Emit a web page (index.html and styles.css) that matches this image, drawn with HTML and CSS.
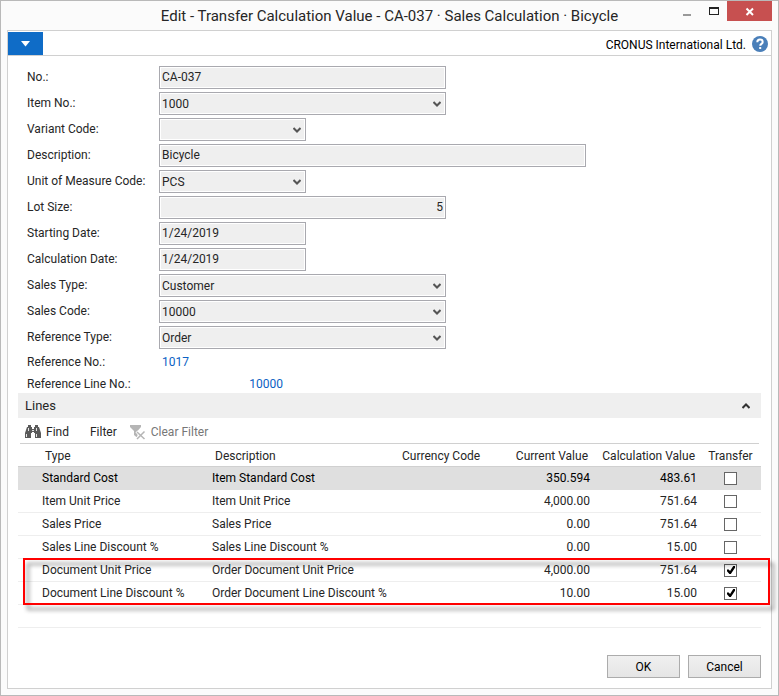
FILE: index.html
```html
<!DOCTYPE html>
<html lang="en">
<head>
<meta charset="utf-8">
<title>Edit - Transfer Calculation Value</title>
<link rel="stylesheet" href="styles.css">
</head>
<body>
<div class="window">
  <header class="titlebar">
    <h1 class="title">Edit - Transfer Calculation Value - CA-037 · Sales Calculation · Bicycle</h1>
    <div class="controls">
      <button class="control" type="button" aria-label="Minimize"><svg width="27" height="20" viewBox="0 0 27 20"><path d="M10 13h8v2h-8z" fill="#999"/></svg></button>
      <button class="control" type="button" aria-label="Maximize"><svg width="27" height="20" viewBox="0 0 27 20"><path d="M9 6h10v8H9zM10 8v5h8V8z" fill="#222" fill-rule="evenodd"/></svg></button>
      <button class="control close" type="button" aria-label="Close"><svg width="45" height="20" viewBox="0 0 45 20"><path d="M19.500 7.500l6.500 6.500M26 7.500l-6.500 6.500" stroke="#fff" stroke-width="2"/></svg></button>
    </div>
  </header>
  <main class="panel">
    <div class="ribbon">
      <button class="app-menu" type="button" aria-label="Application menu"><svg width="9" height="6" viewBox="0 0 9 6"><path d="M0 0h9L4.500 5.500z" fill="#fff"/></svg></button>
      <span class="company">CRONUS International Ltd.</span>
      <button class="help" type="button" aria-label="Help"><svg width="16" height="16" viewBox="0 0 16 16"><circle cx="8" cy="8" r="8" fill="#4a7fb9"/><path d="M5.300 6.200C5.300 4.300 6.500 3.500 8 3.500s2.700.9 2.700 2.400c0 1.900-2.500 2-2.500 3.900" fill="none" stroke="#fff" stroke-width="2"/><path d="M7.200 11h2v2h-2z" fill="#fff"/></svg></button>
    </div>
    <form class="form">
      <div class="row"><label for="no">No.:</label><input class="field" id="no" value="CA-037" readonly></div>
      <div class="row"><label for="item">Item No.:</label><span class="combo"><select class="field" id="item"><option>1000</option></select><svg class="chevron" width="8" height="6" viewBox="0 0 8 6"><path d="M.500 1L4 4.500 7.500 1" /></svg></span></div>
      <div class="row"><label for="variant">Variant Code:</label><span class="combo short"><select class="field" id="variant"><option></option></select><svg class="chevron" width="8" height="6" viewBox="0 0 8 6"><path d="M.500 1L4 4.500 7.500 1" /></svg></span></div>
      <div class="row"><label for="desc">Description:</label><input class="field long" id="desc" value="Bicycle" readonly></div>
      <div class="row"><label for="uom">Unit of Measure Code:</label><span class="combo short"><select class="field" id="uom"><option>PCS</option></select><svg class="chevron" width="8" height="6" viewBox="0 0 8 6"><path d="M.500 1L4 4.500 7.500 1" /></svg></span></div>
      <div class="row"><label for="lot">Lot Size:</label><input class="field number" id="lot" value="5" readonly></div>
      <div class="row"><label for="start">Starting Date:</label><input class="field short" id="start" value="1/24/2019" readonly></div>
      <div class="row"><label for="calc">Calculation Date:</label><input class="field short" id="calc" value="1/24/2019" readonly></div>
      <div class="row"><label for="stype">Sales Type:</label><span class="combo"><select class="field" id="stype"><option>Customer</option></select><svg class="chevron" width="8" height="6" viewBox="0 0 8 6"><path d="M.500 1L4 4.500 7.500 1" /></svg></span></div>
      <div class="row"><label for="scode">Sales Code:</label><span class="combo"><select class="field" id="scode"><option>10000</option></select><svg class="chevron" width="8" height="6" viewBox="0 0 8 6"><path d="M.500 1L4 4.500 7.500 1" /></svg></span></div>
      <div class="row"><label for="rtype">Reference Type:</label><span class="combo"><select class="field" id="rtype"><option>Order</option></select><svg class="chevron" width="8" height="6" viewBox="0 0 8 6"><path d="M.500 1L4 4.500 7.500 1" /></svg></span></div>
      <div class="row compact"><span>Reference No.:</span><a class="value" href="#">1017</a></div>
      <div class="row compact"><span>Reference Line No.:</span><a class="value number-link" href="#">10000</a></div>
    </form>
    <section class="lines">
      <div class="lines-head"><h2>Lines</h2><button class="collapse" type="button" aria-label="Collapse"><svg width="8" height="6" viewBox="0 0 8 6"><path d="M.500 5L4 1.500 7.500 5" fill="none" stroke="#333" stroke-width="2"/></svg></button></div>
      <div class="toolbar">
        <button class="tool find" type="button"><svg width="16" height="14" viewBox="0 0 16 14"><path d="M3 0h3v2h1v2h2V2h1V0h3v2h1l2 6v5h-6V8H9V7H7v1H6v5H0V8l2-6h1z" fill="#5a5a5a"/><path d="M1 9h1v3H1zM11 9h1v3h-1zM3 3h1v3H3zM11 3h1v3h-1zM7 5h2v1H7z" fill="#e4e4e4"/></svg>Find</button>
        <button class="tool" type="button">Filter</button>
        <button class="tool clear" type="button"><svg width="16" height="16" viewBox="0 0 16 16"><path d="M0 1h11v2L7.500 7v7L4 11V7L0 3z" fill="#b5b5b5"/><path d="M6.500 7.500l8 7.500M14.500 7.500l-8 7.500" stroke="#fff" stroke-width="3"/><path d="M7 8l7.500 7M14.500 7.500L7 15" stroke="#b5b5b5" stroke-width="1.500"/></svg>Clear Filter</button>
      </div>
      <div class="grid">
        <table>
          <colgroup><col class="c-type"><col class="c-desc"><col class="c-cur"><col class="c-val"><col class="c-val"><col class="c-check"></colgroup>
          <thead><tr><th>Type</th><th>Description</th><th>Currency Code</th><th class="num">Current Value</th><th class="num">Calculation Value</th><th class="check">Transfer</th></tr></thead>
          <tbody>
            <tr class="selected"><td>Standard Cost</td><td>Item Standard Cost</td><td></td><td class="num">350.594</td><td class="num">483.61</td><td class="check"><input type="checkbox" aria-label="Transfer Standard Cost"></td></tr>
            <tr><td>Item Unit Price</td><td>Item Unit Price</td><td></td><td class="num">4,000.00</td><td class="num">751.64</td><td class="check"><input type="checkbox" aria-label="Transfer Item Unit Price"></td></tr>
            <tr><td>Sales Price</td><td>Sales Price</td><td></td><td class="num">0.00</td><td class="num">751.64</td><td class="check"><input type="checkbox" aria-label="Transfer Sales Price"></td></tr>
            <tr><td>Sales Line Discount %</td><td>Sales Line Discount %</td><td></td><td class="num">0.00</td><td class="num">15.00</td><td class="check"><input type="checkbox" aria-label="Transfer Sales Line Discount"></td></tr>
            <tr><td>Document Unit Price</td><td>Order Document Unit Price</td><td></td><td class="num">4,000.00</td><td class="num">751.64</td><td class="check"><input type="checkbox" checked aria-label="Transfer Document Unit Price"></td></tr>
            <tr><td>Document Line Discount %</td><td>Order Document Line Discount %</td><td></td><td class="num">10.00</td><td class="num">15.00</td><td class="check"><input type="checkbox" checked aria-label="Transfer Document Line Discount"></td></tr>
            <tr><td></td><td></td><td></td><td></td><td></td><td></td></tr>
          </tbody>
        </table>
        <div class="highlight"></div>
      </div>
    </section>
    <footer class="actions">
      <button class="action" type="button">OK</button>
      <button class="action" type="button">Cancel</button>
    </footer>
  </main>
</div>
</body>
</html>
```
FILE: styles.css
```css
* { box-sizing: border-box; }
body {
  margin: 0;
  font: 12px/16px Roboto, "Open Sans", sans-serif;
  color: #262626;
}
button, input, select { font: inherit; color: inherit; margin: 0; }
button { background: none; border: 0; padding: 0; }
svg { display: block; }

.window {
  display: flex;
  flex-direction: column;
  min-height: 100vh;
  padding: 0 7px 6px;
  border: 1px solid #b9b9b9;
  background: #fbfbfb;
}
/* Title bar */
.titlebar {
  display: grid;
  grid-template-columns: 99px 1fr 99px;
  height: 29px;
  margin: 0 -1px;
}
.title {
  grid-column: 2;
  margin: 0;
  font-size: 15px;
  line-height: 30px;
  font-weight: 400;
  text-align: center;
  white-space: nowrap;
}
.controls { display: flex; align-items: flex-start; }
.close { background: #c75050; }

.panel {
  flex: 1;
  display: flex;
  flex-direction: column;
  margin: 0 -1px;
  border: 1px solid #d0d0d0;
  background: #fff;
}
.ribbon {
  display: flex;
  align-items: center;
  height: 25px;
  padding-right: 3px;
  border-bottom: 1px solid #d0d0d0;
}
.app-menu {
  display: grid;
  place-items: center;
  align-self: flex-end;
  width: 35px;
  height: 23px;
  margin-right: auto;
  background: #0f6cc7;
}
.company { margin-right: 6px; padding-top: 4px; color: #000; }
.help { padding-top: 2px; }

/* General fields */
.form {
  display: flex;
  flex-direction: column;
  gap: 3px;
  padding: 10px 10px 0 19px;
}
.row {
  display: grid;
  grid-template-columns: 132px 1fr;
  height: 23px;
  line-height: 22px;
}
.row label { white-space: nowrap; }
.compact { height: 19px; line-height: 20px; }
.field {
  width: 287px;
  max-width: 100%;
  height: 23px;
  padding: 0 2px 2px;
  border: 1px solid #a9a9af;
  border-radius: 0;
  background: #efefef;
  box-shadow: inset 0 0 0 1px #fff;
  appearance: none;
  outline: 0;
}
.combo { position: relative; width: 287px; max-width: 100%; height: 23px; }
.combo .field { width: 100%; padding-bottom: 3px; }
.short { width: 147px; }
.long { width: 427px; }
.number { text-align: right; }
.chevron {
  position: absolute;
  top: 9px;
  right: 5px;
  fill: none;
  stroke: #555;
  stroke-width: 2;
  pointer-events: none;
}
.value { padding-left: 3px; color: #0b62c4; text-decoration: none; }
.number-link { width: 124px; text-align: right; }

/* Lines part */
.lines { padding: 0 10px; }
.lines-head {
  display: flex;
  align-items: center;
  justify-content: space-between;
  height: 25px;
  padding: 0 11px 0 7px;
  background: #efefef;
}
.lines-head h2 { margin: 0; font-size: 13px; font-weight: 400; }
.toolbar {
  display: flex;
  align-items: center;
  gap: 21px;
  height: 26px;
  margin: 0 2px;
  padding: 2px 5px 0;
  border-bottom: 1px solid #d0d0d0;
}
.tool { display: flex; align-items: center; gap: 5px; }
.clear { margin-left: -8px; color: #777; }
.grid { position: relative; }
table { width: 100%; table-layout: fixed; border-collapse: separate; border-spacing: 0; }
.c-type { width: 170px; }
.c-desc { width: 187px; }
.c-val { width: 107px; }
.c-check { width: 61px; }
th, td {
  height: 23px;
  padding: 0 3px 0 24px;
  border-bottom: 1px solid #eee;
  text-align: left;
  white-space: nowrap;
}
th { padding: 1px 5px 0 27px; border-color: #d0d0d0; font-weight: 400; }
.num { padding-left: 0; text-align: right; }
.check { padding-left: 0; padding-right: 0; text-align: center; }
.selected { color: #000; }
.selected td { background: #dfdfdf; border-color: #dfdfdf; }
input[type="checkbox"] {
  appearance: none;
  display: block;
  width: 13px;
  height: 13px;
  margin: 1px auto 0;
  border: 1px solid #666;
  background: #fff;
}
input[type="checkbox"]:checked::before {
  content: "";
  display: block;
  width: 8px;
  height: 8px;
  margin: 1px 2px;
  background: #000;
  clip-path: polygon(0 45%, 22% 45%, 38% 62%, 78% 0, 100% 0, 100% 22%, 48% 100%, 30% 100%, 0 66%);
}
.highlight {
  position: absolute;
  left: 5px;
  right: -9px;
  bottom: 23px;
  height: 47px;
  border: 2px solid #f00;
  filter: drop-shadow(4px 5px 2px rgba(0, 0, 0, .45));
  pointer-events: none;
}
.actions {
  display: flex;
  justify-content: flex-end;
  gap: 8px;
  margin-top: auto;
  padding: 10px;
}
.action {
  width: 73px;
  height: 23px;
  border: 1px solid #acacac;
  background: linear-gradient(#f0f0f0, #e5e5e5);
  color: #000;
}
```
